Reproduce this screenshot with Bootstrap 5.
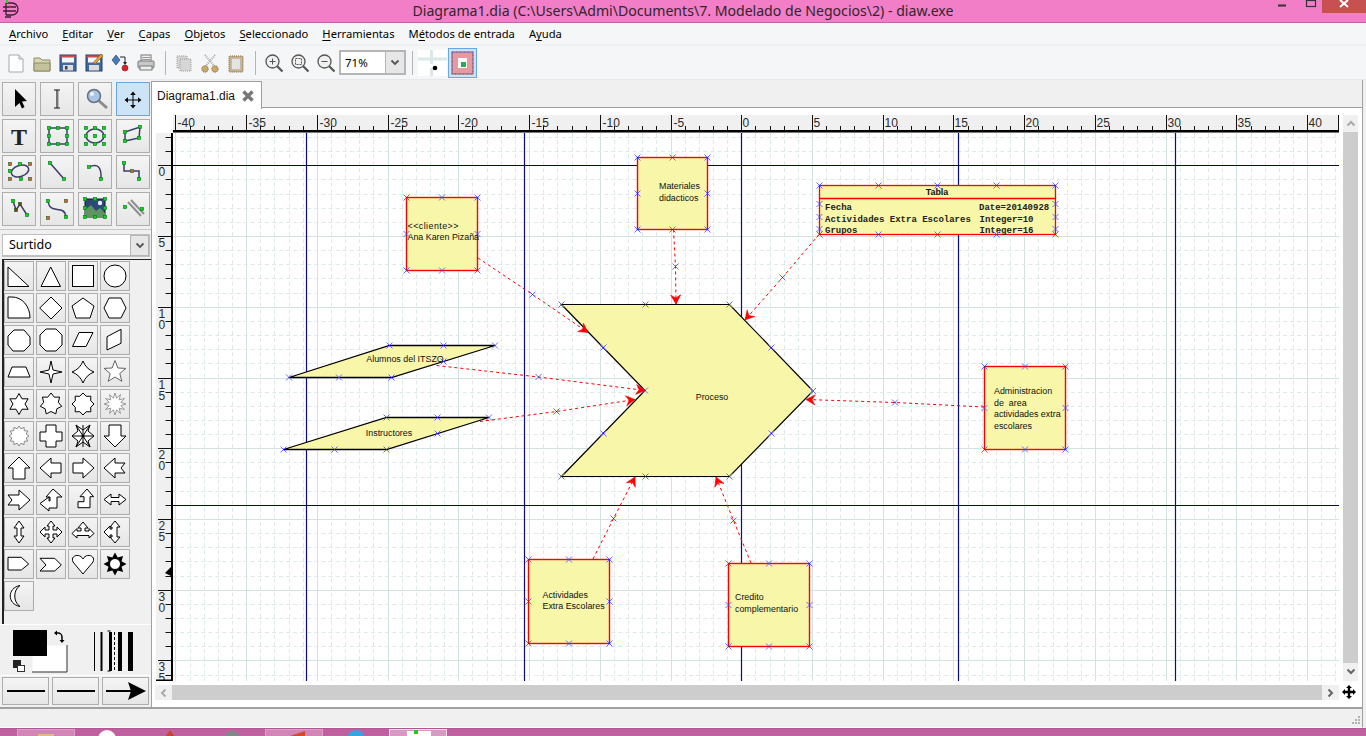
<!DOCTYPE html>
<html lang="es">
<head>
<meta charset="utf-8">
<title>Diagrama1.dia</title>
<link href="https://cdn.jsdelivr.net/npm/bootstrap@5.3.0/dist/css/bootstrap.min.css" rel="stylesheet">
<style>
html,body{height:736px;overflow:hidden;}
body{background:#f0f0f0;color:#000;font-family:"Noto Sans",sans-serif;font-size:11.2px;line-height:1;}
svg{display:block;}
.title-bar{height:23px;background:#f17ec6;border-bottom:1px solid #c863a4;font-size:14.1px;color:#33242e;}
.win-glyphs{top:0;right:0;height:13px;}
.win-close{width:44px;height:13px;background:#c75050;}
.menu-bar{height:22px;background:#f5f6f7;border-bottom:1px solid #f0f0f0;gap:14px;padding:1px 0 0 9px;}
.menu-bar u{text-underline-offset:2px;text-decoration-thickness:1px;}
.tool-bar{height:35px;background:#f5f6f7;border-bottom:1px solid #e8e8e8;padding-left:3px;border-top:1px solid #f0f0f0;}
.tb-btn{width:26px;height:26px;padding:0;border:0;border-radius:0;}
.tb-sep{width:1px;height:24px;background:#b4b4b4;margin:0 5.5px;}
.zoom-box{width:67px;height:25px;flex-wrap:nowrap;border:2px solid #b5b5b5;background:#fff;font-size:11.5px;}
.zoom-val{padding-left:4px;}
.zoom-arrow{width:19px;background:#e7e7e7;border-left:1px solid #b5b5b5;}
.snap-a{width:29px;height:26px;padding:0;border:0;border-radius:0;background:#fff;}
.snap-b{width:29px;height:30px;padding:0;border:1px solid #66a7e8;border-radius:0;background:#cde4f7;margin-left:1px;}
.work{height:627px;}
.side{width:151px;flex:none;}
.tool-grid{display:grid;grid-template-columns:repeat(4,34.4px);column-gap:3.5px;row-gap:2px;padding:2px 0 0 2px;height:146px;}
.pal-btn{padding:0;border:1px solid #adadad;border-radius:0;background:linear-gradient(#f4f4f4,#e6e6e6);width:100%;height:34px;}
.pal-btn.on{background:#cde4f7;border-color:#66a7e8;}
.side-rule{height:1px;background:#c8c8c8;margin:3px 0 4px;}
.sheet-pick{height:23px;margin-left:2px;width:148px;background:#fff;border:1px solid #c0c0c0;border-bottom-width:2px;font-size:12.5px;padding-left:6px;}
.sheet-arrow{width:19px;height:21px;background:#e7e7e7;border:1px solid #b5b5b5;}
.shape-frame{height:365px;margin:2px 0 0 2px;border-left:2px solid #222;border-top:1px solid #222;padding:1px 0 0 0;}
.shape-grid{display:grid;grid-template-columns:repeat(4,30px);grid-auto-rows:30px;gap:2px;}
.shape-grid .pal-btn{height:30px;}
.colors{height:52px;border-top:1px solid #fff;border-bottom:1px solid #fff;}
.line-row{height:28px;margin:1px 0 0 2px;gap:3px;}
.line-row .pal-btn{width:47px;height:28px;}
.doc{width:1212px;border-left:1px solid #a0a0a0;border-right:1px solid #a0a0a0;background:#fff;}
.tab-strip{height:28px;background:#f0f0f0;border-bottom:1px solid #a0a0a0;margin-left:-1px;}
.doc-tab{width:111px;height:28px;background:#fff;border:1px solid #a0a0a0;border-bottom:0;margin-top:1px;padding-left:5px;gap:6px;font-family:"Liberation Sans",sans-serif;font-size:12px;color:#111;}
.doc-grid{display:grid;grid-template-columns:17px 1166px 4px 15px;grid-template-rows:18px 548px 15px;row-gap:0;padding:7px 0 0 4px;}
.ruler-v{background:#f0f0f0;}
.corner{background:#fff;}
.vscroll{grid-column:4;grid-row:1 / span 2;background:#f0f0f0;}
.vthumb{height:531px;background:#cdcdcd;flex:none;}
.sb-btn{height:17px;flex:none;}
.hscroll{grid-column:1 / span 2;margin:4px 0 -4px -1px;width:1184px;background:#f0f0f0;height:15px;}
.hthumb{flex:1;background:#cdcdcd;}
.sb-btn-h{width:17px;}
.pan-cell{grid-column:3 / span 2;margin-top:4px;}
.status{height:21px;border-top:2px solid #a0a0a0;background:#f0f0f0;margin-right:3px;border-bottom:1px solid #fff;border-right:1px solid #a0a0a0;}
.task{height:8px;background:#c0619f;padding-left:13px;border-top:1px solid #b55594;overflow:hidden;}
.task-slot{width:62px;padding:0 0 0 4px;}
.task-item{width:58px;height:8px;}
.task-item.lit{background:#d286b8;border:1px solid #dca0c8;border-bottom:0;}
.task-item.cur{background:#d79bc3;border:1px solid #f4dcea;border-bottom:0;}
.dia-txt{font-family:"Liberation Sans",sans-serif;font-size:8.9px;fill:#111;}
.dia-wide{letter-spacing:.45px;}
.dia-mono{font-family:"Liberation Mono",monospace;font-size:9px;font-weight:700;fill:#222;}
.rule-txt{font-family:"Liberation Sans",sans-serif;font-size:12px;fill:#2b2b2b;}
</style>
</head>
<body class="d-flex flex-column">

<header class="title-bar d-flex align-items-center justify-content-center position-relative">
  <svg class="position-absolute top-0 start-0" width="20" height="22" viewBox="0 0 20 22"><path d="M6 3h6a5 5 0 0 1 0 12H6M6 3v12M3 7h13M3 11h13M5 17h6" fill="none" stroke="#3a2030" stroke-width="1.3"/><rect x="6" y="0" width="2" height="3" fill="#1fdc2a"/><path d="M10 5v3" stroke="#d33" stroke-width="1"/></svg>
  <span>Diagrama1.dia (C:\Users\Admi\Documents\7. Modelado de Negocios\2) - diaw.exe</span>
  <div class="win-glyphs position-absolute d-flex">
    <svg width="70" height="13" viewBox="0 0 70 13"><rect x="26" y="4.5" width="8" height="2" fill="#333"/><rect x="54.5" y="0.5" width="9" height="6" fill="none" stroke="#333" stroke-width="1.2"/></svg>
    <div class="win-close d-flex justify-content-center"><svg width="12" height="9" viewBox="0 0 12 9"><path d="M2 0L10 7M10 0L2 7" stroke="#fff" stroke-width="2"/></svg></div>
  </div>
</header>

<nav class="menu-bar d-flex align-items-center">
  <span><u>A</u>rchivo</span><span><u>E</u>ditar</span><span><u>V</u>er</span><span><u>C</u>apas</span><span><u>O</u>bjetos</span><span><u>S</u>eleccionado</span><span><u>H</u>erramientas</span><span>M<u>é</u>todos de entrada</span><span>A<u>y</u>uda</span>
</nav>

<div class="tool-bar d-flex align-items-center">
  <button class="btn tb-btn" aria-label="Nuevo"><svg width="26" height="26" viewBox="0 0 26 26"><path d="M6 5h10l4 4v13H6z" fill="#fff" stroke="#a8a8a8"/><path d="M16 5v4h4" fill="#e6e6e6" stroke="#a8a8a8"/></svg></button>
  <button class="btn tb-btn" aria-label="Abrir"><svg width="26" height="26" viewBox="0 0 26 26"><path d="M5 8h6l2 2h8v11H5z" fill="#d8d6b4" stroke="#8d8c66"/><path d="M5 13h16v8H5z" fill="#c4c29a" stroke="#8d8c66"/></svg></button>
  <button class="btn tb-btn" aria-label="Guardar"><svg width="26" height="26" viewBox="0 0 26 26"><rect x="5" y="5" width="16" height="16" fill="#3f6da3" stroke="#243f66"/><rect x="5.5" y="5.5" width="15" height="2" fill="#d24a4a"/><rect x="7" y="7.500" width="12" height="5" fill="#f6f6f6"/><rect x="8" y="15" width="10" height="5.500" fill="#dcdcdc"/><rect x="10" y="16" width="2.500" height="3.500" fill="#345"/></svg></button>
  <button class="btn tb-btn" aria-label="Guardar como"><svg width="26" height="26" viewBox="0 0 26 26"><rect x="5" y="5" width="16" height="16" fill="#3f6da3" stroke="#243f66"/><rect x="5.500" y="5.500" width="15" height="2" fill="#d24a4a"/><rect x="7" y="7.500" width="12" height="5" fill="#f6f6f6"/><rect x="8" y="15" width="10" height="5.500" fill="#dcdcdc"/><path d="M12 13L20 4l2 2-8 8z" fill="#e8a23a" stroke="#8a5a12" stroke-width=".7"/></svg></button>
  <button class="btn tb-btn" aria-label="Exportar"><svg width="26" height="26" viewBox="0 0 26 26"><path d="M9 5l4 5-4 5-4-5z" fill="#4a7ab5" stroke="#2a4a77" stroke-width=".7"/><path d="M13 7h5v7" fill="none" stroke="#222"/><path d="M16 12h4l-2 3z" fill="#222"/><circle cx="18" cy="18" r="3" fill="#d9232e" stroke="#7c1218" stroke-width=".6"/></svg></button>
  <button class="btn tb-btn" aria-label="Imprimir"><svg width="26" height="26" viewBox="0 0 26 26"><rect x="8" y="5" width="10" height="7" fill="#f0f0f0" stroke="#777"/><rect x="5" y="11" width="16" height="7" rx="1" fill="#c9c9c9" stroke="#777"/><rect x="7" y="16" width="12" height="4" fill="#eee" stroke="#777"/><path d="M9 7.500h8M9 9.500h8" stroke="#999"/></svg></button>
  <div class="tb-sep"></div>
  <button class="btn tb-btn" aria-label="Copiar"><svg width="26" height="26" viewBox="0 0 26 26"><g fill="#d6d6d6" stroke="#999" stroke-dasharray="1 1"><rect x="6" y="6" width="10" height="12"/><rect x="9" y="9" width="11" height="12"/></g></svg></button>
  <button class="btn tb-btn" aria-label="Cortar"><svg width="26" height="26" viewBox="0 0 26 26"><path d="M8 5l10 12M18 5L8 17" stroke="#aaa" stroke-width="2" stroke-dasharray="1 1"/><circle cx="8" cy="19" r="3.200" fill="#c9a86a" stroke="#7c5f2e" stroke-dasharray="1 1"/><circle cx="18" cy="19" r="3.200" fill="#c9a86a" stroke="#7c5f2e" stroke-dasharray="1 1"/></svg></button>
  <button class="btn tb-btn" aria-label="Pegar"><svg width="26" height="26" viewBox="0 0 26 26"><rect x="6" y="6" width="14" height="16" rx="1" fill="#c9b48c" stroke="#7c5f2e" stroke-dasharray="1 1"/><rect x="8.500" y="8.500" width="9" height="11" fill="#e4e4e4" stroke="#aaa" stroke-dasharray="1 1"/></svg></button>
  <div class="tb-sep"></div>
  <button class="btn tb-btn" aria-label="Ampliar"><svg width="26" height="26" viewBox="0 0 26 26"><circle cx="11.500" cy="11.500" r="6.500" fill="#f0f0f0" stroke="#555" stroke-width="1.300"/><path d="M16 16l5.500 5.500" stroke="#555" stroke-width="2.200"/><path d="M8.500 11.500h6M11.500 8.500v6" stroke="#555"/></svg></button>
  <button class="btn tb-btn" aria-label="Ajustar"><svg width="26" height="26" viewBox="0 0 26 26"><circle cx="11.500" cy="11.500" r="6.500" fill="#f0f0f0" stroke="#555" stroke-width="1.300"/><path d="M16 16l5.500 5.500" stroke="#555" stroke-width="2.200"/><rect x="8.500" y="8.500" width="6" height="6" fill="none" stroke="#555" stroke-dasharray="2 1"/></svg></button>
  <button class="btn tb-btn" aria-label="Reducir"><svg width="26" height="26" viewBox="0 0 26 26"><circle cx="11.500" cy="11.500" r="6.500" fill="#f0f0f0" stroke="#555" stroke-width="1.300"/><path d="M16 16l5.500 5.500" stroke="#555" stroke-width="2.200"/><path d="M8.500 11.500h6" stroke="#555"/></svg></button>
  <div class="zoom-box d-flex align-items-center">
    <span class="zoom-val flex-grow-1">71%</span>
    <span class="zoom-arrow h-100 d-flex align-items-center justify-content-center"><svg width="10" height="7" viewBox="0 0 10 7"><path d="M1.500 1.500L5 5l3.500-3.500" fill="none" stroke="#555" stroke-width="1.800"/></svg></span>
  </div>
  <div class="tb-sep"></div>
  <button class="btn snap-a" aria-label="Cuadrícula"><svg width="29" height="26" viewBox="0 0 29 26"><path d="M13.500 0v14M13.500 18v8M0 9h29" stroke="#dbe8e5" stroke-width="3"/><circle cx="17" cy="18" r="2.300" fill="#000"/></svg></button>
  <button class="btn snap-b" aria-label="Ajustar a objetos"><svg width="27" height="28" viewBox="0 0 27 28"><rect x="3" y="3" width="21" height="22" fill="#e39aa0" stroke="#7c5a60"/><rect x="9" y="9" width="9" height="10" fill="#fff"/><rect x="12" y="13" width="5" height="5" fill="#22b14c"/><path d="M3 3h21v22H3z" fill="none" stroke="#5a5aff" stroke-dasharray="1 3"/></svg></button>
</div>

<div class="work d-flex">
  <aside class="side d-flex flex-column">
    <div class="tool-grid" id="tools"></div>
    <div class="side-rule"></div>
    <div class="sheet-pick d-flex align-items-center justify-content-between">
      <span>Surtido</span>
      <span class="sheet-arrow d-flex align-items-center justify-content-center"><svg width="10" height="7" viewBox="0 0 10 7"><path d="M1.500 1.500L5 5l3.500-3.500" fill="none" stroke="#555" stroke-width="1.800"/></svg></span>
    </div>
    <div class="shape-frame"><div class="shape-grid" id="shapes"></div></div>
    <div class="colors">
      <svg width="151" height="50" viewBox="0 625 151 50">
        <rect x="32.500" y="645.500" width="34" height="26" fill="#fff"/><path d="M32 672h35v-27" fill="none" stroke="#333"/>
        <rect x="13" y="630" width="34" height="26" fill="#000"/>
        <rect x="13" y="660" width="8" height="8" fill="#222"/><rect x="17.500" y="665.500" width="7" height="6" fill="#fff" stroke="#333"/>
        <path d="M56 633h2a4 4 0 0 1 4 4v3" fill="none" stroke="#000" stroke-width="1.500"/><path d="M54 633l3-2.500v5zM59.500 640h5l-2.500 3z" fill="#000"/>
        <g fill="#000"><rect x="94" y="632" width="1" height="39"/><rect x="100.500" y="632" width="2" height="39"/><rect x="109" y="632" width="3" height="39"/><rect x="118" y="632" width="4" height="39"/><rect x="128" y="632" width="5" height="39"/></g>
        <path d="M107.500 631h3M107.500 671h3M114.500 632v39" stroke="#000" stroke-dasharray="3 2"/>
      </svg>
    </div>
    <div class="line-row d-flex">
      <button class="btn pal-btn" aria-label="Línea"><svg width="45" height="26" viewBox="0 0 45 26"><path d="M4 13h38" stroke="#000" stroke-width="2"/></svg></button>
      <button class="btn pal-btn" aria-label="Estilo"><svg width="45" height="26" viewBox="0 0 45 26"><path d="M4 13h38" stroke="#000" stroke-width="2"/></svg></button>
      <button class="btn pal-btn" aria-label="Flecha"><svg width="45" height="26" viewBox="0 0 45 26"><path d="M3 13h30" stroke="#000" stroke-width="2"/><path d="M25 4l18 9-18 9 3-9z" fill="#000"/></svg></button>
    </div>
  </aside>

  <section class="doc d-flex flex-column">
    <div class="tab-strip"><div class="doc-tab d-flex align-items-center"><span>Diagrama1.dia</span><svg width="14" height="14" viewBox="0 0 14 14"><path d="M2.500 2.500l9 9M11.500 2.500l-9 9" stroke="#777" stroke-width="3.400"/></svg></div></div>
    <div class="doc-grid">
      <div class="corner"></div>
      <svg id="rulerTop" width="1166" height="18" viewBox="173 115 1166 18"></svg>
      <div></div>
      <div class="vscroll d-flex flex-column">
        <div class="sb-btn d-flex align-items-center justify-content-center"><svg width="10" height="7" viewBox="0 0 10 7"><path d="M1.500 5.500L5 2l3.500 3.500" fill="none" stroke="#aaa" stroke-width="2"/></svg></div>
        <div class="vthumb"></div>
        <div class="sb-btn d-flex align-items-center justify-content-center"><svg width="10" height="7" viewBox="0 0 10 7"><path d="M1.500 1.500L5 5l3.500-3.500" fill="none" stroke="#666" stroke-width="2"/></svg></div>
      </div>
      <svg id="rulerLeft" class="ruler-v" width="17" height="548" viewBox="156 133 17 548"></svg>
      <svg id="canvas" width="1166" height="548" viewBox="173 133 1166 548"></svg>
      <div></div>
      <div class="hscroll d-flex">
        <div class="sb-btn-h d-flex align-items-center justify-content-center"><svg width="7" height="10" viewBox="0 0 7 10"><path d="M5.500 1.500L2 5l3.500 3.500" fill="none" stroke="#aaa" stroke-width="2"/></svg></div>
        <div class="hthumb"></div>
        <div class="sb-btn-h d-flex align-items-center justify-content-center"><svg width="7" height="10" viewBox="0 0 7 10"><path d="M1.500 1.500L5 5 1.500 8.500" fill="none" stroke="#666" stroke-width="2"/></svg></div>
      </div>
      <div class="pan-cell d-flex justify-content-center"><svg width="14" height="14" viewBox="0 0 14 14"><path d="M7 0l3 3H8.200v2.800H11V4l3 3-3 3V8.200H8.200V11H10l-3 3-3-3h1.800V8.200H3V10L0 7l3-3v1.800h2.800V3H4z" fill="#000"/></svg></div>
    </div>
  </section>
</div>

<footer class="status d-flex justify-content-end align-items-end"><svg width="14" height="12" viewBox="0 0 14 12"><g fill="#b0b0b0"><rect x="10" y="1" width="2" height="2"/><rect x="7" y="4" width="2" height="2"/><rect x="10" y="4" width="2" height="2"/><rect x="4" y="7" width="2" height="2"/><rect x="7" y="7" width="2" height="2"/><rect x="10" y="7" width="2" height="2"/></g></svg></footer>

<div class="task d-flex">
  <div class="task-slot"><div class="task-item lit d-flex justify-content-center"><svg width="22" height="8" viewBox="0 0 22 8"><rect x="3" y="4" width="16" height="6" fill="#d8c27a"/></svg></div></div>
  <div class="task-slot"><div class="task-item d-flex justify-content-center"><svg width="22" height="8" viewBox="0 0 22 8"><circle cx="10" cy="10" r="9" fill="#fff"/></svg></div></div>
  <div class="task-slot"><div class="task-item d-flex justify-content-center"><svg width="22" height="8" viewBox="0 0 22 8"><path d="M11 1l5 7H6z" fill="#c8452e"/></svg></div></div>
  <div class="task-slot"><div class="task-item d-flex justify-content-center"><svg width="22" height="8" viewBox="0 0 22 8"><circle cx="11" cy="10" r="8" fill="#7d8c86"/></svg></div></div>
  <div class="task-slot"><div class="task-item lit d-flex justify-content-center"><svg width="26" height="8" viewBox="0 0 26 8"><path d="M3 8L24 1v7z" fill="#d4492a"/></svg></div></div>
  <div class="task-slot"><div class="task-item d-flex justify-content-center"><svg width="22" height="8" viewBox="0 0 22 8"><circle cx="11" cy="10" r="9" fill="#33a6e0"/></svg></div></div>
  <div class="task-slot"><div class="task-item cur d-flex justify-content-center"><svg width="34" height="8" viewBox="0 0 34 8"><rect x="6" y="1" width="24" height="7" fill="#fff"/><rect x="13" y="0" width="4" height="4" fill="#22c52a"/></svg></div></div>
</div>

<script>
/* ---------- palette helpers ---------- */
function star(n,R,r,rot){var p=[];for(var i=0;i<n*2;i++){var a=(rot||-90)*Math.PI/180+i*Math.PI/n,q=i%2?r:R;p.push((15+q*Math.cos(a)).toFixed(1)+','+(15+q*Math.sin(a)).toFixed(1));}return p.join(' ');}
function pg(p,x){return '<polygon points="'+p+'" fill="#fff" stroke="'+(x||'#000')+'"/>';}
function pa(d,x){return '<path d="'+d+'" fill="#fff" stroke="'+(x||'#000')+'"/>';}
var shapes=[
 pg('4,6 4,25.500 25,25.500'),pg('14.700,6 5,25.500 24.500,25.500'),'<rect x="4.500" y="4.500" width="21" height="21" fill="#fff" stroke="#000"/>','<circle cx="15" cy="15" r="11" fill="#fff" stroke="#000"/>',
 pa('M4 4H8C18 4 26 13 26 25H4Z'),pg('3.700,15 15,4 26,15 15,26'),pg('15,5 26,13 22,25 8,25 4,13'),pg('4,15 9,5 21,5 26,15 21,25 9,25'),
 pg('10,5 20,5 26,12 26,20 20,26 9,26 4,20 4,11'),pg('10,4 20,4 26,10 26,20 20,26 10,26 4,20 4,10'),pg('4.500,21.500 11,7.500 25,7.500 18,21.500'),pg('7,11.700 21,4.300 21,18.300 7,25'),
 pg('4,20 8,10 22,10 26,20'),pg('15,4 17,13 26,15 17,17 15,26 13,17 4,15 13,13'),pa('M15 4Q18 12 26 15Q18 18 15 26Q12 18 4 15Q12 12 15 4Z'),pg(star(5,11.500,5),'#666'),
 pg(star(6,10.500,6)),pg(star(7,11,7.500)),pg(star(8,11,8.300)),pg(star(12,11,6),'#999'),
 pg(star(12,10,7.500),'#888'),pg('10,4 20,4 20,11 26,11 26,20 20,20 20,26 10,26 10,20 4,20 4,11 10,11'),
 pa('M8 4L15 9 22 4 20 10 26 15 20 20 22 26 15 21 8 26 10 20 4 15 10 10Z M8 4L22 26M22 4L8 26M4 15H26M15 4V26')+'<circle cx="15" cy="15" r="1.500" fill="#000"/>',pg('9,4 21,4 21,15 26,15 15,26 4,15 9,15'),
 pg('15,4 26,15 21,15 21,26 9,26 9,15 4,15'),pg('4,15 15,5 15,10 25,10 25,20 15,20 15,25'),pg('26,15 15,5 15,10 5,10 5,20 15,20 15,25'),pg('4,15 15,5 15,10 25,10 21,15 25,20 15,20 15,25'),
 pg('4,10 15,10 15,5 26,15 15,25 15,20 4,20 8,15'),pg('17,4 26,12 21,12 21,23 13,23 13,26 4,18.500 13,12 13,16 14,16 14,12 10,12'),pg('19,4 25.600,11.700 22,11.700 22,22.700 10,22.700 10,16.700 16,16.700 16,11.700 12,11.700'),pg('4,14.500 11,9 11,12.500 19,12.500 19,9 26,14.500 19,20 19,16.500 11,16.500 11,20'),
 pg('15,4 20,11 17,11 17,19 20,19 15,26 10,19 13,19 13,11 10,11'),pg('15,4 19,9 17,9 17,13 21,13 21,10 26,15 21,20 21,17 17,17 17,21 19,21 15,26 11,21 13,21 13,17 9,17 9,20 4,15 9,10 9,13 13,13 13,9 11,9'),pg('15,5 20,11 17,11 17,14 21,14 21,11.500 26,16.500 21,21 21,18.500 9,18.500 9,21 4,16.500 9,11.500 9,14 13,14 13,11 10,11'),pg('15,4 20,10 17,10 17,20 20,20 15,26 10,20 12,20 12,18 10,18 10,21 4,15 10,9 10,12 12,12 12,10 10,10'),
 pg('4,8.300 17.300,8.300 24.700,15 17.300,21 4,21'),pg('4,9.300 18.700,9.300 25.300,16 18.700,22 4,22 10,16'),pa('M15 25L5 13C2 6 12 4 15 10C18 4 28 6 25 13Z'),'<polygon points="'+star(8,11.500,7)+'" fill="#000"/><circle cx="15" cy="15" r="5.500" fill="#fff" stroke="#000"/>',
 pa('M16 4.500C3 7 3 23 16 25.500C9 21 9 9 16 4.500Z')
];
document.getElementById('shapes').innerHTML=shapes.map(function(s){return '<button class="btn pal-btn" aria-label="Forma"><svg width="28" height="28" viewBox="1 1 28 28">'+s+'</svg></button>';}).join('');

function hs(list,c){return list.map(function(p){return '<rect x="'+(p[0]-1.700)+'" y="'+(p[1]-1.700)+'" width="3.400" height="3.400" fill="'+(c||'#0dd80d')+'" stroke="#063" stroke-width=".5"/>';}).join('');}
var sh='stroke="#3c3c6a" fill="none" stroke-width="1.500"';
var tools=[
 '<polygon points="13,7 13,25 17.500,21 20,26.500 22.500,25 20,19.500 25,19" fill="#000"/>',
 '<path d="M14 8H20M17 8V26M14 26H20" fill="none" stroke="#111" stroke-width="1.100"/><path d="M18.500 9V25" stroke="#bbb"/>',
 '<path d="M20 18L29 26" stroke="#8b8b8b" stroke-width="3"/><circle cx="16" cy="14" r="6.500" fill="#a9c4e6" stroke="#66707c" stroke-width="1.500"/><circle cx="14" cy="12" r="2" fill="#eef5ff"/>',
 '<path d="M17 11V25M10 18H24" stroke="#000"/><path d="M17 9.500l-2.800 3.500h5.600zM17 26.500l-2.800-3.500h5.600zM8.500 18l3.500-2.800v5.600zM25.500 18L22 15.200v5.600z" fill="#000"/>',
 '<text x="17" y="25.500" text-anchor="middle" font-family="Liberation Serif,serif" font-weight="700" font-size="24" fill="#222">T</text>',
 '<rect x="9" y="9" width="18" height="16" '+sh+'/>'+hs([[9,9],[18,9],[27,9],[9,17],[27,17],[9,25],[18,25],[27,25]]),
 '<ellipse cx="17" cy="17" rx="9" ry="7" '+sh+'/>'+hs([[8,9],[17,9],[26,9],[8,17],[17,17],[26,17],[8,25],[17,25],[26,25]]),
 '<polygon points="9,13 24,8 23,19 9,22" '+sh+'/>'+hs([[9,13],[24,8],[23,19],[9,22]]),
 '<ellipse cx="18" cy="16" rx="9" ry="5.500" transform="rotate(-18 18 16)" '+sh+'/>'+hs([[8,9],[28,9],[8,24],[28,24]],'#e0602a')+hs([[18,9],[8,16],[19,24]]),
 '<path d="M10 8L24 24" '+sh+'/>'+hs([[10,8],[24,24]]),
 '<path d="M11 12Q24 6 23 24" '+sh+'/>'+hs([[11,12],[23,24]]),
 '<path d="M8 8V16H23V24" '+sh+'/>'+hs([[8,8],[23,24]])+hs([[16,16]],'#e0602a'),
 '<path d="M11 9L14 18 18 12 25 23" '+sh+'/>'+hs([[11,9],[25,23]])+hs([[14,18],[18,12]],'#8a3a10'),
 '<path d="M8 9C10 24 24 11 26 25" '+sh+'/>'+hs([[8,9],[26,25]])+hs([[26,9],[8,26]],'#e0602a'),
 '<rect x="7" y="7" width="20" height="18" fill="#2c4a77" stroke="#112"/><path d="M7 25V18L13 13 18 19 22 16 27 21V25Z" fill="#5e9460"/><circle cx="22" cy="11" r="2.200" fill="#eef"/>'+hs([[7,7],[17,7],[27,7],[7,16],[27,16],[7,25],[17,25],[27,25]]),
 '<path d="M12 10L25 24M15 8L28 22" stroke="#8f8f8f" stroke-width="2"/>'+hs([[9,15],[26,17]])
];
document.getElementById('tools').innerHTML=tools.map(function(s,i){return '<button class="btn pal-btn'+(i==3?' on':'')+'" aria-label="Herramienta"><svg width="32" height="32" viewBox="1 1 32 32">'+s+'</svg></button>';}).join('');

/* ---------- rulers ---------- */
var X0=175.4,Y0=165.3,U=14.147,o='<rect x="173" y="115" width="1166" height="18" fill="#f0f0f0"/>';
for(var k=0;k<=80;k++){var x=Math.round(X0+k*U)+.5,v=-40+k;
 if(k%5==0){o+='<path d="M'+x+' 115V131" stroke="#111"/><text class="rule-txt" x="'+(x+(v<0?2:1))+'" y="127">'+v+'</text>';}
 else o+='<path d="M'+x+' 126V131" stroke="#111"/>';}
document.getElementById('rulerTop').innerHTML=o+'<path d="M1338.500 115V131" stroke="#111"/><rect x="173" y="130" width="1166" height="2.500" fill="#000"/>';
o='';
for(k=-2;k<=36;k++){var y=Math.round(Y0+k*U)+.5;
 if(k%5==0){o+='<path d="M158 '+y+'H173" stroke="#111"/>';var s=String(k);
   o+='<text class="rule-txt">';for(var j=0;j<s.length;j++)o+='<tspan x="158.500" y="'+(y+10.500+j*11)+'">'+s[j]+'</tspan>';o+='</text>';}
 else o+='<path d="M165.500 '+y+'H173" stroke="#111"/>';}
o+='<rect x="171" y="133" width="2.500" height="548" fill="#000"/><path d="M171 567v9l-6-3z" fill="#000"/><rect x="156" y="679.500" width="17" height="1.500" fill="#000"/>';
document.getElementById('rulerLeft').innerHTML=o;

/* ---------- canvas ---------- */
var g='';
for(k=0;k<=82;k++){x=Math.round(X0+k*U)+.5;if(x>1339)break;
 g+='<line x1="'+x+'" y1="133" x2="'+x+'" y2="681" stroke="'+(k%5?'#deeae7" stroke-dasharray="4 3.070':'#d3e3df')+'"/>';}
for(k=-2;k<=36;k++){y=Math.round(Y0+k*U)+.5;
 g+='<line x1="173" y1="'+y+'" x2="1339" y2="'+y+'" stroke="'+(k%5?'#deeae7" stroke-dasharray="4 3.070':'#d3e3df')+'"/>';}
[306.5,524.5,741.5,958.5,1175.5].forEach(function(a){g+='<line x1="'+a+'" y1="133" x2="'+a+'" y2="681" stroke="#0a0a96" stroke-width="1.200"/>';});
[165.5,505.5].forEach(function(a){g+='<line x1="173" y1="'+a+'" x2="1339" y2="'+a+'" stroke="#000070" stroke-width="1.200"/>';});

var F='#f7f6a9';
function box(a,b,c,d){return '<rect x="'+a+'" y="'+b+'" width="'+(c-a)+'" height="'+(d-b)+'" fill="'+F+'" stroke="#f00" stroke-width="1.400"/>';}
function txt(x,y,t,an,cl){return '<text class="'+(cl||'dia-txt')+'" x="'+x+'" y="'+y+'"'+(an?' text-anchor="middle"':'')+' xml:space="preserve">'+t+'</text>';}
function hd(x,y){return '<path d="M'+(x-3)+' '+(y-3)+'l6 6M'+(x+3)+' '+(y-3)+'l-6 6" stroke="#6a6aff"/><rect x="'+(x-.5)+'" y="'+(y-.5)+'" width="1" height="1" fill="#303080"/>';}
function boxH(a,b,c,d){var m=(a+c)/2,n=(b+d)/2;return [[a,b],[m,b],[c,b],[a,n],[c,n],[a,d],[m,d],[c,d]].map(function(p){return hd(p[0],p[1]);}).join('');}
function conn(a,b,c,d,mx,my){var L=Math.hypot(c-a,d-b),ux=(c-a)/L,uy=(d-b)/L,nx=-uy,ny=ux,
  p=function(l,w){return (c-ux*l+nx*w).toFixed(1)+','+(d-uy*l+ny*w).toFixed(1);};
  return '<polyline points="'+a+','+b+' '+mx+','+my+' '+c+','+d+'" fill="none" stroke="#f00" stroke-dasharray="3 3"/>'+
  '<polygon points="'+c+','+d+' '+p(9,5)+' '+p(6,0)+' '+p(9,-5)+'" fill="#f00" stroke="#f00" stroke-width=".6"/>'+hd(mx,my);}

// parallelograms
g+='<polygon points="289,377.500 391.500,377.500 495,345.500 389.500,345.500" fill="'+F+'" stroke="#000" stroke-width="1.300"/>';
g+='<polygon points="283.500,449.500 386.500,449.500 489,417.500 386.500,417.500" fill="'+F+'" stroke="#000" stroke-width="1.300"/>';
[[289,377.5],[339,377.5],[391.5,377.5],[443.5,361.5],[495,345.5],[443.5,345.5],[389.5,345.5]].forEach(function(p){g+=hd(p[0],p[1]);});
[[283.5,449.5],[334.5,449.5],[386.5,449.5],[437.5,433.5],[489,417.5],[437.5,417.5],[386.5,417.5]].forEach(function(p){g+=hd(p[0],p[1]);});
g+=txt(405,362,'Alumnos del ITSZO',1)+txt(389,436,'Instructores',1);

// chevron
g+='<polygon points="561.500,304.500 729.500,304.500 813,391 729.500,476.500 561.500,476.500 645,390.500" fill="'+F+'" stroke="#000" stroke-width="1.200"/>';
[[561.5,304.5],[645.5,304.5],[729.5,304.5],[771.5,347.5],[813,391],[771.5,433.5],[729.5,476.5],[645.5,476.5],[561.5,476.5],[603.5,433.5],[645,390.5],[603.5,347.5]].forEach(function(p){g+=hd(p[0],p[1]);});
g+=txt(712,400,'Proceso',1);

// boxes
g+=box(406.5,197.5,477.5,270.5)+boxH(406.5,197.5,477.5,270.5)+txt(407.5,229,'&lt;&lt;cliente&gt;&gt;',0,'dia-txt dia-wide')+txt(407.5,240,'Ana Karen Pizaña');
g+=box(637.5,157.5,707.5,229.5)+boxH(637.5,157.5,707.5,229.5)+txt(659,189,'Materiales')+txt(659,201,'didacticos');
g+=box(984.5,366.5,1065.5,449.5)+boxH(984.5,366.5,1065.5,449.5)+txt(994,394,'Administracion')+txt(994,405.500,'de  area')+txt(994,417,'actividades extra')+txt(994,428.500,'escolares');
g+=box(528.5,559.5,609.5,643.5)+boxH(528.5,559.5,609.5,643.5)+txt(542.5,598,'Actividades')+txt(542.5,609,'Extra Escolares');
g+=box(728.5,563.5,809.5,646.5)+boxH(728.5,563.5,809.5,646.5)+txt(735,600,'Credito')+txt(735,612,'complementario');

// table
g+='<rect x="819.500" y="185.500" width="236" height="49" fill="'+F+'" stroke="#f00" stroke-width="1.300"/><line x1="819.500" y1="198.500" x2="1055.500" y2="198.500" stroke="#f00" stroke-width="1.300"/>';
g+='<text class="dia-txt" x="937" y="195" text-anchor="middle" font-weight="700">Tabla</text>';
g+=txt(825,210,'Fecha',0,'dia-mono')+txt(979,210,'Date=20140928',0,'dia-mono')+txt(825,222,'Actividades Extra Escolares',0,'dia-mono')+txt(979.500,222,'Integer=10',0,'dia-mono')+txt(825,233,'Grupos',0,'dia-mono')+txt(979.500,233,'Integer=16',0,'dia-mono');
[819.5,878.5,937.5,996.5,1055.5].forEach(function(a){g+=hd(a,185.5)+hd(a,234.5);});
[204,217,229].forEach(function(a){g+=hd(819.5,a)+hd(1055.5,a);});

// connectors
g+=conn(478,258,588,332.5,532.5,294.5);
g+=conn(673.5,229.5,676,304,675.5,266.5);
g+=conn(819,234.5,745,320,782.5,277.5);
g+=conn(436.5,365.5,645,390.5,538.5,377);
g+=conn(480,421.5,635,399.5,556.5,411.5);
g+=conn(984,407,806,399.5,895,402.5);
g+=conn(593,559,635,477,613.5,518.5);
g+=conn(751,563,716,477,733.5,520.5);
document.getElementById('canvas').innerHTML=g;
</script>
<script src="https://cdn.jsdelivr.net/npm/bootstrap@5.3.0/dist/js/bootstrap.bundle.min.js"></script>
</body>
</html>
